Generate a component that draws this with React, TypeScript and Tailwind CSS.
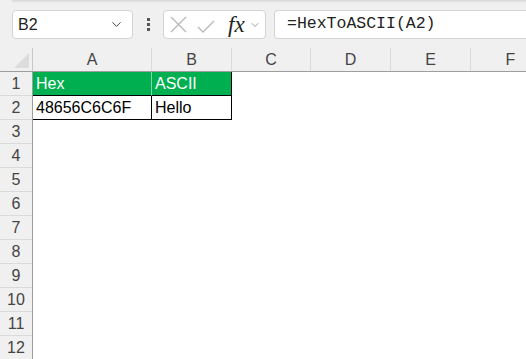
import { ChevronDown } from "lucide-react";

const cols = [
  { id: "A", w: 119 },
  { id: "B", w: 80 },
  { id: "C", w: 79 },
  { id: "D", w: 80 },
  { id: "E", w: 80 },
  { id: "F", w: 80 },
];

const rows = Array.from({ length: 12 }, (_, i) => i + 1);

export default function App() {
  return (
    <div className="w-[526px] h-[359px] overflow-hidden bg-white font-['Liberation_Sans',sans-serif]">
      {/* formula bar */}
      <div className="h-[48px] bg-[#f0f0f0] relative flex items-start pt-[10px] pl-[12px]">
        <div className="absolute top-0 left-[12px] right-0 h-[3px] bg-gradient-to-b from-[#d6d6d6] to-[#f0f0f0]" />
        <div className="w-[121px] h-[29px] bg-white border border-[#d4d4d4] rounded-[4px] flex items-center justify-between pl-[5px] pr-[8px]">
          <span className="text-[16px] text-[#222]">B2</span>
          <ChevronDown size={15} strokeWidth={1.6} className="text-[#444]" />
        </div>
        <div className="w-[30px] h-[29px] flex flex-col items-center justify-center gap-[2px]">
          <span className="w-[3px] h-[3px] bg-[#555]" />
          <span className="w-[3px] h-[3px] bg-[#555]" />
          <span className="w-[3px] h-[3px] bg-[#555]" />
        </div>
        <div className="w-[103px] h-[29px] bg-white border border-[#d4d4d4] rounded-[4px] flex items-center pl-[6px]">
          <svg width="17" height="17" viewBox="0 0 17 17" className="text-[#b8b8b8]">
            <path d="M1 1 L16 16 M16 1 L1 16" stroke="currentColor" strokeWidth="1.3" fill="none" />
          </svg>
          <svg width="18" height="13" viewBox="0 0 18 13" className="ml-[10px] mt-[3px] text-[#b8b8b8]">
            <path d="M1 7 L6 12 L17 1" stroke="currentColor" strokeWidth="1.3" fill="none" />
          </svg>
          <span className="ml-[13px] text-[23px] italic font-['Liberation_Serif',serif] text-[#222] leading-none">fx</span>
          <ChevronDown size={12} strokeWidth={1.4} className="text-[#777] ml-[4px]" />
        </div>
        <div className="ml-[8px] flex-1 h-[29px] bg-white border border-[#d4d4d4] border-r-0 rounded-l-[4px] flex items-center pl-[12px]">
          <span className="text-[16.5px] font-['Liberation_Mono',monospace] text-[#222]">=HexToASCII(A2)</span>
        </div>
      </div>

      {/* column headers */}
      <div className="flex h-[24px] bg-[#f0f0f0] border-b border-[#9e9e9e]">
        <div className="w-[33px] shrink-0 border-r border-[#c8c8c8] relative">
          <div className="absolute right-[3px] bottom-[3px] w-0 h-0 border-l-[15px] border-l-transparent border-b-[15px] border-b-[#dcdcdc]" />
        </div>
        {cols.map((c) => (
          <div
            key={c.id}
            style={{ width: c.w }}
            className="shrink-0 border-r border-[#dadada] flex items-center justify-center text-[16px] text-[#444]"
          >
            {c.id}
          </div>
        ))}
      </div>

      {/* grid */}
      <div className="flex">
        <div className="w-[33px] shrink-0 bg-[#f0f0f0] border-r border-[#9e9e9e]">
          {rows.map((r) => (
            <div
              key={r}
              className="h-[24px] border-b border-[#dadada] flex items-center justify-center text-[16px] text-[#444]"
            >
              {r}
            </div>
          ))}
        </div>
        <div className="flex-1">
          <div className="flex h-[24px]">
            <div className="w-[119px] bg-[#00b050] text-white text-[16px] flex items-center pl-[3px] border-b border-black border-r border-r-[#7fd7a7]">
              Hex
            </div>
            <div className="w-[80px] bg-[#00b050] text-white text-[16px] flex items-center pl-[3px] border-b border-black border-r">
              ASCII
            </div>
          </div>
          <div className="flex h-[24px]">
            <div className="w-[119px] text-black text-[16px] flex items-center pl-[3px] border-b border-black border-r">
              48656C6C6F
            </div>
            <div className="w-[80px] text-black text-[16px] flex items-center pl-[3px] border-b border-black border-r">
              Hello
            </div>
          </div>
        </div>
      </div>
    </div>
  );
}
